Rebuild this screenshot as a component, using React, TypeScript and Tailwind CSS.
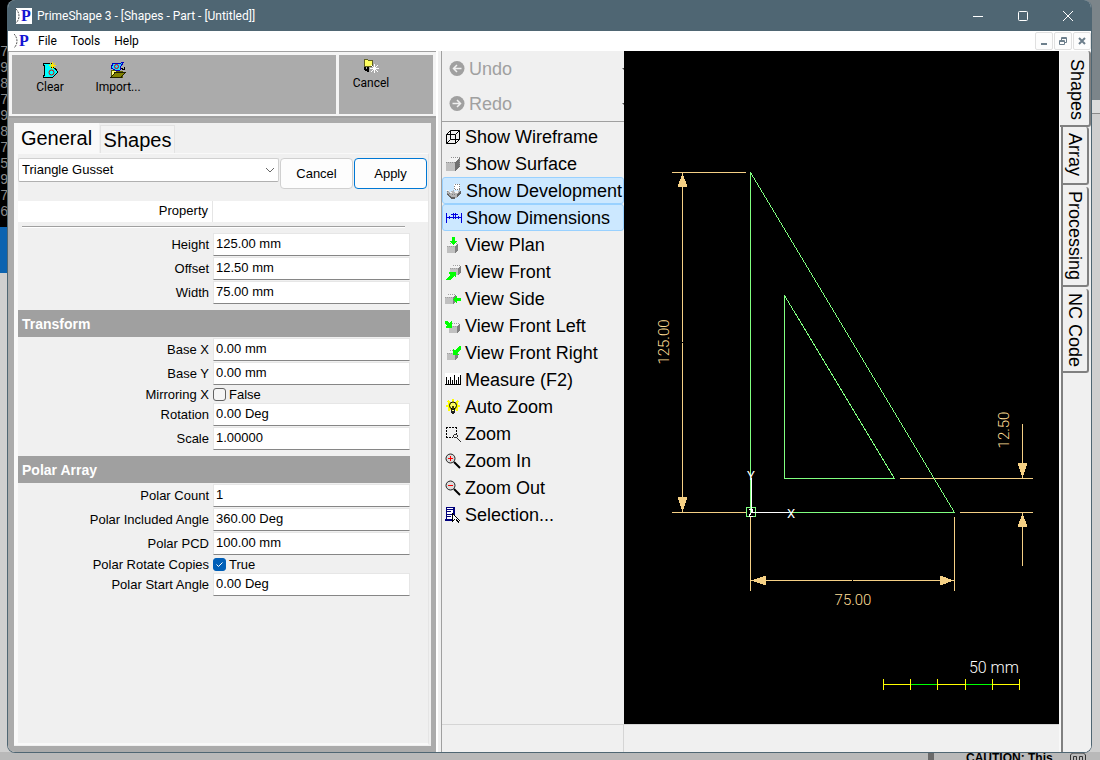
import React from "react";
import clsx from "clsx";

const TERMINAL_LINES = ["75", "95", "81", "75", "99", "80", "73", "53", "92", "78", "65"];

const ICON = "size-4 shrink-0";

const Icon = ({ children }: { children: React.ReactNode }) => (
  <svg className={ICON} viewBox="0 0 16 16" shapeRendering="crispEdges" fill="none" aria-hidden="true">
    {children}
  </svg>
);

// grey solid block shared by the view icons
const Block = ({ x = 0, y = 0 }: { x?: number; y?: number }) => (
  <g transform={`translate(${x} ${y})`}>
    <path d="M0 4h8v7H0z" fill="#c0c0c0" />
    <path d="M8 4l3-3v7l-3 3z" fill="#808080" />
    <path d="M0 4l3-3h8L8 4z" fill="#f4f4f4" />
    <path d="M0 4.5h8M3 1.5h8" stroke="#a0a0a0" strokeDasharray="1 1" />
  </g>
);

const WireframeIcon = () => (
  <Icon>
    <path
      d="M1.5 5.5h9v9h-9zM5.5 1.5h9v9h-9zM1.5 5.5l4-4M10.5 5.5l4-4M10.5 14.5l4-4M1.5 14.5l4-4"
      stroke="#000"
      shapeRendering="auto"
    />
  </Icon>
);

const SurfaceIcon = () => (
  <Icon>
    <path d="M1 6h9v9H1z" fill="#c0c0c0" />
    <path d="M10 6l5-5v9l-5 5z" fill="#707070" />
    <path d="M1 6l5-5h9l-5 5z" fill="#f4f4f4" />
    <path d="M6 1.5h9M14.5 1v9M1 6.5h9" stroke="#909090" strokeDasharray="1 1" />
  </Icon>
);

const DevelopmentIcon = () => (
  <Icon>
    <path d="M8 1h6v6H8z" fill="#fff" />
    <path d="M8.5 1.5h5v5h-5z" stroke="#808080" strokeDasharray="1 1" />
    <path d="M1 7l3 2 4-2 1 3 5-3v4l-4 4H5l-4-4z" fill="#b4b4b4" />
    <path d="M1 10l4 4h4v2H5l-4-4zM11 11l4-4v3l-4 5z" fill="#606060" />
    <path d="M0 7h3v1H0zM4 9h2v1H4zM9 8h3v2H9z" fill="#f4f4f4" />
    <path d="M1.5 8v4M3.5 10v3M6 11.5h4" stroke="#808080" strokeDasharray="1 1" />
  </Icon>
);

const DimensionsIcon = () => (
  <Icon>
    <path d="M.5 3v10M15.5 3v10M1 7.5h4M11 7.5h4M3.5 6v3M12.5 6v3" stroke="#0000e0" />
    <path d="M7.5 3v6M9.5 3v6M5 4.5h7M5 7.5h6" stroke="#0000e0" />
  </Icon>
);

const PlanIcon = () => (
  <Icon>
    <Block x={2} y={5} />
    <path d="M7 0h3v4h3L8.500 8 4 4h3z" fill="#00ff00" />
  </Icon>
);

const FrontIcon = () => (
  <Icon>
    <Block x={5} y={0} />
    <path d="M4 8h7v6l-2-2-4 4H1l4-5z" fill="#00ff00" />
  </Icon>
);

const SideIcon = () => (
  <Icon>
    <Block x={0} y={2} />
    <path d="M8 8l4-4v3h4v3h-4v3z" fill="#00ff00" />
  </Icon>
);

const FrontLeftIcon = () => (
  <Icon>
    <Block x={4} y={4} />
    <path d="M0 3h2l2 2 2-2h1v7H1V8h1L0 5z" fill="#00ff00" />
  </Icon>
);

const FrontRightIcon = () => (
  <Icon>
    <Block x={2} y={4} />
    <path d="M16 1h-2l-4 4-2-1v6h6V9h-2l4-5z" fill="#00ff00" />
  </Icon>
);

const MeasureIcon = () => (
  <Icon>
    <path d="M0 1h16v12H0z" fill="#fff" />
    <path d="M0 12.500h16M1.500 5v7M3.500 8v4M5.500 5v7M7.500 8v4M9.500 3v9M11.500 8v4M13.500 5v7M15.500 3v9" stroke="#000" />
  </Icon>
);

const BulbIcon = () => (
  <Icon>
    <path d="M3 2l10 10M13 2L3 12M8 0v6M1 7h14" stroke="#ffff00" strokeWidth="2" />
    <path d="M3 3h10v8H3z" fill="#ffff00" />
    <circle cx="8" cy="6.500" r="3.500" fill="#ffff60" stroke="#000" shapeRendering="auto" />
    <path d="M7 7.500h2M7.500 7v5M8.500 7v5" stroke="#404000" />
    <path d="M6 10h4v4H9v1H7v-1H6z" fill="#202020" />
    <path d="M7 11h2v1H7z" fill="#ffff80" />
  </Icon>
);

const ZoomWindowIcon = () => (
  <Icon>
    <path d="M1 1.500h11M1.500 1v11M1 11.500h7M11.500 1v7" stroke="#000" strokeDasharray="2 1" />
    <path d="M9 8.500h3M9 11.500h3M8.500 9v2M12.500 9v2" stroke="#303030" />
    <path d="M12 12l4 4" stroke="#303030" shapeRendering="auto" />
  </Icon>
);

const Magnifier = ({ plus }: { plus?: boolean }) => (
  <Icon>
    <circle cx="5.500" cy="5.500" r="4.500" fill="#dcdcdc" stroke="#202020" shapeRendering="auto" />
    <path d={plus ? "M3 5.500h5M5.500 3v5" : "M3 5.500h5"} stroke="#ff0000" />
    <path d="M9 9l6 6" stroke="#000" strokeWidth="2" shapeRendering="auto" />
  </Icon>
);

const SelectionIcon = () => (
  <Icon>
    <path d="M1 0h8v12H1z" fill="#fff" stroke="#00007b" />
    <path d="M2 2.500h6M2 4.500h4M2 7.500h6M2 9.500h4" stroke="#00007b" />
    <path d="M9 0v12M0 12.500h9" stroke="#00007b" strokeWidth="2" />
    <path d="M7 7l8 7h-4l-1 2-3-2z" fill="#fff" />
    <path d="M7 6l8 8M7.500 7v8M7 14.500l3-2M11 12l3 4" stroke="#000" />
  </Icon>
);

const ClearIcon = () => (
  <Icon>
    <path d="M1 1h8v4h3l3 4v2l-4 4H1v-2h1V3H1z" fill="#00ffff" stroke="#000" />
    <circle cx="9.500" cy="10.500" r="2.500" stroke="#e00000" shapeRendering="auto" />
    <path d="M10.500 0v7M7 3.500h7M8 1l5 5M13 1L8 6" stroke="#ffe600" />
  </Icon>
);

const ImportIcon = () => (
  <Icon>
    <path d="M1 8h4l1 1h6v6H1z" fill="#ffff80" stroke="#606000" />
    <path d="M1 15.500l4-5h10l-4 5z" fill="#808000" stroke="#202000" />
    <path d="M3 1h8l3-1-3 4-1 4H5L1 6z" fill="#20d8ff" stroke="#0000c0" />
    <circle cx="6.500" cy="4.500" r="2" stroke="#e00000" shapeRendering="auto" />
    <path d="M11 6.500h2M14.500 5v3M12 7.500h3" stroke="#000" />
  </Icon>
);

const CancelIcon = () => (
  <Icon>
    <path d="M1 1h3l1 1h4v6H1z" fill="#ffff60" stroke="#606020" />
    <path d="M1.500 9v3M2 11.500h4M4.500 9v5" stroke="#000" strokeWidth="2" />
    <path d="M11.500 6v9M7 10.500h9M8 7l7 7M15 7l-7 7" stroke="#fff" />
  </Icon>
);

const AppLogo = () => (
  <span className="flex size-4 items-center gap-px bg-white font-['Liberation_Serif',serif] text-base leading-4 font-bold text-[#1414d2]">
    <svg className="h-4 w-1 shrink-0" viewBox="0 0 4 16" fill="none" aria-hidden="true">
      <path d="M0 1c4 4 4 10 0 14" stroke="#555" strokeDasharray="2 1" />
    </svg>
    P
  </span>
);

const TOOLS = [
  { label: "Show Wireframe", icon: <WireframeIcon /> },
  { label: "Show Surface", icon: <SurfaceIcon /> },
  { label: "Show Development", icon: <DevelopmentIcon />, on: true },
  { label: "Show Dimensions", icon: <DimensionsIcon />, on: true },
  { label: "View Plan", icon: <PlanIcon /> },
  { label: "View Front", icon: <FrontIcon /> },
  { label: "View Side", icon: <SideIcon /> },
  { label: "View Front Left", icon: <FrontLeftIcon /> },
  { label: "View Front Right", icon: <FrontRightIcon /> },
  { label: "Measure (F2)", icon: <MeasureIcon /> },
  { label: "Auto Zoom", icon: <BulbIcon /> },
  { label: "Zoom", icon: <ZoomWindowIcon /> },
  { label: "Zoom In", icon: <Magnifier plus /> },
  { label: "Zoom Out", icon: <Magnifier /> },
  { label: "Selection...", icon: <SelectionIcon /> },
];

type Property = { label: string; value: string | boolean };

const SIZE: Property[] = [
  { label: "Height", value: "125.00 mm" },
  { label: "Offset", value: "12.50 mm" },
  { label: "Width", value: "75.00 mm" },
];

const TRANSFORM: Property[] = [
  { label: "Base X", value: "0.00 mm" },
  { label: "Base Y", value: "0.00 mm" },
  { label: "Mirroring X", value: false },
  { label: "Rotation", value: "0.00 Deg" },
  { label: "Scale", value: "1.00000" },
];

const POLAR: Property[] = [
  { label: "Polar Count", value: "1" },
  { label: "Polar Included Angle", value: "360.00 Deg" },
  { label: "Polar PCD", value: "100.00 mm" },
  { label: "Polar Rotate Copies", value: true },
  { label: "Polar Start Angle", value: "0.00 Deg" },
];

const PropertyRow = ({ label, value }: Property) => {
  const id = label.toLowerCase().replace(/ /g, "-");

  if (typeof value === "boolean") {
    return (
      <div className="flex h-[17px] items-center">
        <label htmlFor={id} className="w-[191px] text-right">
          {label}
        </label>
        <span className="relative ml-1 flex size-[13px]">
          <input
            id={id}
            type="checkbox"
            defaultChecked={value}
            className="peer size-[13px] appearance-none rounded-[3px] border border-[#626262] bg-[#f5f5f5] checked:border-[#005fb8] checked:bg-[#005fb8]"
          />
          <svg
            className="pointer-events-none absolute inset-0 hidden size-[13px] peer-checked:block"
            viewBox="0 0 13 13"
            fill="none"
            stroke="#fff"
          >
            <path d="M3.500 6.500l2 2 4-4" />
          </svg>
        </span>
        <span className="ml-[3px]">{value ? "True" : "False"}</span>
      </div>
    );
  }

  return (
    <div className="flex h-6 items-start">
      <label htmlFor={id} className="w-[191px] text-right leading-6">
        {label}
      </label>
      <input
        id={id}
        defaultValue={value}
        className="ml-1 h-[23px] w-[197px] border border-[#e6e6e6] border-b-[#868686] bg-white px-[2px] pb-[2px] outline-none"
      />
    </div>
  );
};

const SectionTitle = ({ children }: { children: React.ReactNode }) => (
  <h3 className="mt-[5px] mb-px flex h-[27px] w-[392px] items-center bg-[#a0a0a0] px-1 text-sm font-bold text-white">
    {children}
  </h3>
);

const ToolbarButton = ({ icon, label }: { icon: React.ReactNode; label: string }) => (
  <button type="button" className="flex w-[68px] flex-col items-center gap-px leading-4">
    {icon}
    {label}
  </button>
);

const PropertiesPanel = () => (
  <section className="flex w-[430px] shrink-0 flex-col border-r-2 border-r-white bg-[#ababab]">
    <div className="flex h-[67px] gap-1 border-t border-b-2 border-l border-[#a0a0a0] bg-[#f4f4f4] p-[3px] pb-[2px] font-[Roboto,sans-serif] text-xs">
      <div className="flex flex-1 items-start bg-[#ababab] px-1 pt-[7px]">
        <ToolbarButton icon={<ClearIcon />} label="Clear" />
        <ToolbarButton icon={<ImportIcon />} label="Import..." />
      </div>
      <div className="-ml-px flex w-[94px] items-start bg-[#ababab] pt-[3px] pr-[30px]">
        <ToolbarButton icon={<CancelIcon />} label="Cancel" />
      </div>
    </div>

    <div className="mt-[5px] mr-[5px] mb-1.5 ml-1.5 flex flex-1 flex-col bg-[#f0f0f0] text-[13px]">
      <div className="flex gap-px text-xl leading-7" role="tablist">
        <button type="button" role="tab" aria-selected="true" className="h-[30px] w-[85px] bg-[#f9f9f9]">
          General
        </button>
        <button
          type="button"
          role="tab"
          aria-selected="false"
          className="mt-0.5 h-7 w-[75px] border border-b-0 border-[#e3e3e3] bg-[#f3f3f3]"
        >
          Shapes
        </button>
      </div>

      <div className="mr-0.5 mb-px flex-1 border border-l-4 border-b-2 border-[#f9f9f9] border-r-[#e5e5e5] bg-[#f0f0f0] pt-1">
        <div className="flex items-start gap-px">
          <div className="relative h-6 w-[261px]">
            <select
              aria-label="Shape"
              className="h-6 w-full appearance-none rounded-[2px] border border-[#d0d0d0] border-b-[#b0b0b0] bg-white px-[3px] outline-none"
            >
              <option>Triangle Gusset</option>
            </select>
            <svg
              className="pointer-events-none absolute top-2 right-1 h-2 w-2.5"
              viewBox="0 0 10 8"
              fill="none"
              stroke="#666"
            >
              <path d="M1 2l4 4 4-4" />
            </svg>
          </div>
          <button type="button" className="h-[31px] w-[73px] rounded-[4px] border border-[#d0d0d0] bg-[#fdfdfd]">
            Cancel
          </button>
          <button type="button" className="h-[31px] w-[73px] rounded-[4px] border border-[#0078d4] bg-[#fdfdfd]">
            Apply
          </button>
        </div>

        <div className="mt-3 flex h-[21px] bg-white leading-5">
          <span className="w-[195px] border-r border-[#e5e5e5] pr-1 text-right">Property</span>
        </div>
        <div className="mt-1 mb-[5px] ml-1 h-0.5 w-[383px] border-t border-[#a0a0a0] bg-white" />

        {SIZE.map((p) => (
          <PropertyRow key={p.label} {...p} />
        ))}
        <SectionTitle>Transform</SectionTitle>
        {TRANSFORM.map((p) => (
          <PropertyRow key={p.label} {...p} />
        ))}
        <SectionTitle>Polar Array</SectionTitle>
        {POLAR.map((p) => (
          <PropertyRow key={p.label} {...p} />
        ))}
      </div>
    </div>
  </section>
);

const HistoryButton = ({ label, flip }: { label: string; flip?: boolean }) => (
  <button type="button" disabled className="flex h-[35px] w-full items-center gap-1 pl-[7px] text-[#a0a0a0]">
    <svg className={clsx("size-4", flip && "-scale-x-100")} viewBox="0 0 16 16" fill="none" aria-hidden="true">
      <circle cx="8" cy="7.500" r="7.500" fill="#a0a0a0" />
      <path d="M12.500 7.500H4.500M8 4L4.500 7.500 8 11" stroke="#f0f0f0" strokeWidth="1.5" />
    </svg>
    {label}
    <svg className="ml-auto h-1 w-0.5" viewBox="0 0 2 4" aria-hidden="true">
      <path d="M0 1h2v2z" fill="#555" />
    </svg>
  </button>
);

const ToolList = () => (
  <nav className="w-[182px] shrink-0 text-lg leading-6">
    <div className="h-[71px] border-b border-[#a0a0a0]">
      <HistoryButton label="Undo" />
      <HistoryButton label="Redo" flip />
    </div>
    <div className="pt-px">
      {TOOLS.map((tool) => (
        <button
          key={tool.label}
          type="button"
          className={clsx(
            "flex h-[27px] w-full items-center gap-1 text-left whitespace-nowrap",
            tool.on ? "rounded-[3px] border border-[#99d1ff] bg-[#cce8ff] px-[3px]" : "pr-1 pl-[3px]",
          )}
        >
          {tool.icon}
          {tool.label}
        </button>
      ))}
    </div>
  </nav>
);

const Drawing = () => (
  <svg
    className="h-0 w-full flex-1 bg-black font-[Roboto,sans-serif]"
    viewBox="624 51 435 673"
    fill="none"
    shapeRendering="crispEdges"
    role="img"
    aria-label="Triangle gusset"
  >
    {/* dimensions */}
    <g stroke="#f5d085">
      <path d="M672 172.500h74M672 512.500h74M682.500 172v340" />
      <path d="M750.500 517v74M954.500 517v74M750 580.500h204" />
      <path d="M900 478.500h133M960 512.500h73M1022.500 424v54M1022.500 513v53" />
    </g>
    <g fill="#f5d085" fontSize="15" textAnchor="middle" className="font-light">
      <path d="M682.500 173l5 14h-10zM682.500 512l5-15h-10z" />
      <path d="M751 580.500l15-5v10zM954 580.500l-14-5v10z" />
      <path d="M1022.500 478l5-15h-10zM1022.500 513l5 14h-10z" />
      <text x="853" y="605" fill="#ffdf96">
        75.00
      </text>
      <text transform="translate(669 342) rotate(-90)" fill="#ffdf96">
        125.00
      </text>
      <text transform="translate(1009 430) rotate(-90)" fill="#ffdf96">
        12.50
      </text>
    </g>
    <path d="M682 342.500h1M852.500 580v1" stroke="#000" />

    {/* part outline */}
    <g stroke="#80ff80">
      <path d="M750.500 172.500v340h204zM784.500 295.500v183h110z" />
      <path d="M746.500 507.500h9v9h-9z" />
    </g>

    {/* origin */}
    <path d="M751.500 478v34M751 512.500h38M749 509.500h4M749 516.500h4M753 510l-4 6" stroke="#fff" />
    <g fill="#fff" fontSize="13" textAnchor="middle">
      <text x="751" y="480">Y</text>
      <text x="791" y="518">X</text>
    </g>

    {/* scale bar */}
    <path d="M883 684.500h137M883.500 679v11M910.500 679v11M937.500 679v11M965.500 679v11M992.500 679v11M1019.500 679v11" stroke="#ffff00" />
    <path d="M911 684.500h26M966 684.500h26" stroke="#00ff00" />
    <text x="1019" y="673" fontSize="16" textAnchor="end" fill="#fff" className="font-light">
      50 mm
    </text>
  </svg>
);

const SideTab = ({ label, className }: { label: string; className: string }) => (
  <button
    type="button"
    className={clsx(
      "rounded-r-[3px] border-r-2 border-b-2 border-[#808080] bg-[#f0f0f0] text-lg leading-6 [writing-mode:vertical-rl]",
      className,
    )}
  >
    {label}
  </button>
);

const SideTabs = () => (
  <aside className="flex w-8 shrink-0 flex-col bg-[#f8f8f8]">
    <SideTab label="Shapes" className="ml-px h-[76px] w-[31px] pt-1 pl-1" />
    <div className="ml-0.5 flex flex-1 flex-col gap-[2px] border-l-2 border-[#808080] bg-[#f0f0f0] pr-0.5">
      <SideTab label="Array" className="h-[58px] w-[26px]" />
      <SideTab label="Processing" className="h-[100px] w-[26px]" />
      <SideTab label="NC Code" className="h-[84px] w-[26px]" />
    </div>
  </aside>
);

const TitleBar = () => (
  <header className="flex h-[31px] items-center bg-[#4f6673] pl-2 text-xs text-white">
    <AppLogo />
    <h1 className="ml-[5px] flex-1">PrimeShape 3 - [Shapes - Part - [Untitled]]</h1>
    <div className="flex">
      <button type="button" aria-label="Minimize" className="flex h-[30px] w-[45px] items-center justify-center">
        <svg className="size-2.5" viewBox="0 0 10 10" stroke="#fff">
          <path d="M0 5.500h10" />
        </svg>
      </button>
      <button type="button" aria-label="Maximize" className="flex h-[30px] w-[45px] items-center justify-center">
        <svg className="size-2.5" viewBox="0 0 10 10" fill="none" stroke="#fff">
          <rect x=".5" y=".5" width="9" height="9" rx="1" />
        </svg>
      </button>
      <button type="button" aria-label="Close" className="flex h-[30px] w-[46px] items-center justify-center">
        <svg className="size-2.5" viewBox="0 0 10 10" stroke="#fff">
          <path d="M0 0l10 10M10 0L0 10" />
        </svg>
      </button>
    </div>
  </header>
);

const CHILD_BUTTON = "flex h-[18px] w-[18px] items-center justify-center rounded-[2px] border border-[#e0e0e0] bg-[#fdfdfd]";

const MenuBar = () => (
  <div className="flex h-5 items-center bg-white pl-1.5 text-xs">
    <AppLogo />
    <nav className="flex flex-1 gap-3.5 pl-2">
      <button type="button">File</button>
      <button type="button">Tools</button>
      <button type="button">Help</button>
    </nav>
    <div className="flex gap-px">
      <button type="button" aria-label="Minimize child" className={CHILD_BUTTON}>
        <svg className="size-2.5" viewBox="0 0 10 10" stroke="#6d7f8c" strokeWidth="2">
          <path d="M2 8h6" />
        </svg>
      </button>
      <button type="button" aria-label="Restore child" className={CHILD_BUTTON}>
        <svg className="size-2.5" viewBox="0 0 10 10" fill="none" stroke="#6d7f8c">
          <path d="M1.500 4.500h5v4h-5zM3.500 4V1.500h5v5H7M1 5.500h6M3 2.500h6" />
        </svg>
      </button>
      <button type="button" aria-label="Close child" className={CHILD_BUTTON}>
        <svg className="size-2.5" viewBox="0 0 10 10" stroke="#6d7f8c" strokeWidth="2">
          <path d="M2 2l6 6M8 2L2 8" />
        </svg>
      </button>
    </div>
  </div>
);

const Desktop = () => (
  <div className="absolute inset-0 flex flex-col overflow-hidden bg-[#b9b9b9]">
    <div className="flex flex-1 justify-between">
      <div className="flex w-4 flex-col bg-[#cfcfcf]">
        <div className="h-[227px] overflow-hidden bg-black pt-11 font-['Liberation_Mono',monospace] text-sm leading-4 text-[#8a8a8a]">
          {TERMINAL_LINES.map((line, i) => (
            <div key={i}>{line}</div>
          ))}
        </div>
        <div className="h-[46px] bg-[#0c63b0]" />
      </div>
      <div className="flex w-4 flex-col bg-[#cfcfcf]">
        <div className="h-[100px] bg-[#7c858a]" />
        <div className="h-3.5 border-b border-[#8a8a8a] bg-[#dcdcdc]" />
      </div>
    </div>
    <div className="flex h-2 justify-end bg-[#b9b9b9]">
      <div className="mr-8 h-2 w-1.5 bg-[#6a6a6a]" />
      <span className="w-[104px] text-xs leading-3 font-bold whitespace-nowrap text-black">CAUTION: This</span>
      <svg className="mr-3.5 h-2 w-4" viewBox="0 0 16 8" fill="none" stroke="#333">
        <path d="M.5 8V3l2-2h11l2 2v5M3.500 8V4.500h3V8M9.500 8V4.500h3V8" />
      </svg>
    </div>
  </div>
);

export default function App() {
  return (
    <div className="relative flex min-h-screen pr-2 pb-[7px] pl-[7px] font-['Liberation_Sans',Arial,sans-serif] text-black">
      <Desktop />
      <main className="relative flex flex-1 flex-col overflow-hidden rounded-lg border border-t-0 border-[#4f6673] bg-[#f0f0f0]">
        <div className="font-[Roboto,sans-serif]">
          <TitleBar />
          <MenuBar />
        </div>
        <div className="flex flex-1">
          <PropertiesPanel />
          <div className="ml-[3px] flex min-w-0 flex-1 flex-col border-l border-[#a0a0a0]">
            <div className="flex flex-1">
              <ToolList />
              <div className="flex min-w-0 flex-1 flex-col">
                <Drawing />
              </div>
            </div>
            <footer className="flex h-7 border-t border-[#d5d5d5]">
              <div className="w-[182px] border-r border-[#d5d5d5]" />
            </footer>
          </div>
          <SideTabs />
        </div>
      </main>
    </div>
  );
}
